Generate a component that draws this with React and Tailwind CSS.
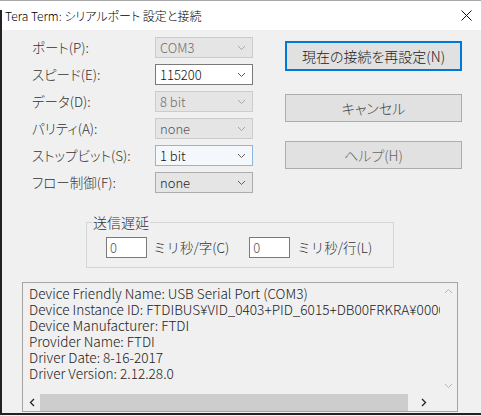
import React from "react";

const Chevron = ({ color = "#606060" }) => (
  <svg width="9" height="6" viewBox="0 0 9 6">
    <path d="M1 1l3.5 3.5L8 1" fill="none" stroke={color} strokeWidth="1" />
  </svg>
);

const rows = [
  { label: "ポート(P):", value: "COM3", box: "bg-[#e5e5e5] border-[#cccccc] text-[#6d6d6d]", chev: "#a8a8a8" },
  { label: "スピード(E):", value: "115200", box: "bg-white border-[#7a7a7a] text-[#111]", chev: "#606060" },
  { label: "データ(D):", value: "8 bit", box: "bg-[#e5e5e5] border-[#cccccc] text-[#6d6d6d]", chev: "#a8a8a8" },
  { label: "パリティ(A):", value: "none", box: "bg-[#e5e5e5] border-[#cccccc] text-[#555]", chev: "#a8a8a8" },
  { label: "ストップビット(S):", value: "1 bit", box: "bg-[#f4f8fc] border-[#8fb6dc] text-[#111]", chev: "#606060" },
  { label: "フロー制御(F):", value: "none", box: "bg-[#e5e5e5] border-[#adadad] text-[#222]", chev: "#606060" },
];

const info = [
  "Device Friendly Name: USB Serial Port (COM3)",
  "Device Instance ID: FTDIBUS¥VID_0403+PID_6015+DB00FRKRA¥0000",
  "Device Manufacturer: FTDI",
  "Provider Name: FTDI",
  "Driver Date: 8-16-2017",
  "Driver Version: 2.12.28.0",
];

export default function App() {
  return (
    <div className="w-[481px] h-[416px] bg-[#f0f0f0] relative overflow-hidden font-['Noto_Sans_CJK_JP',sans-serif] font-light [font-feature-settings:'palt'] text-[#222]">
      <div className="h-px bg-[#a9a9a9]" />
      <div className="h-[29px] bg-white flex items-center justify-between pl-[5px] pr-[9px]">
        <span className="text-[12px] text-black leading-none">Tera Term: シリアルポート 設定と接続</span>
        <svg width="11" height="11" viewBox="0 0 11 11">
          <path d="M0.5 0.5l10 10M10.5 0.5l-10 10" stroke="#111" strokeWidth="1" />
        </svg>
      </div>

      <div className="flex pt-[7px]">
        <div className="ml-[32px] flex flex-col gap-[6px]">
          {rows.map((r) => (
            <div key={r.label} className="flex items-center h-[21px]">
              <span className="w-[123px] text-[13.5px] leading-none text-[#333]">{r.label}</span>
              <div className={`w-[98px] h-[21px] border flex items-center justify-between pl-[4px] pr-[6px] text-[13px] ${r.box}`}>
                <span className="leading-none">{r.value}</span>
                <Chevron color={r.chev} />
              </div>
            </div>
          ))}
        </div>

        <div className="ml-[32px] w-[177px] flex flex-col pt-[4px]">
          <div className="h-[30px] border-2 border-[#0078d7] bg-[#e1e1e1] flex items-center justify-center text-[14px] text-[#222]">
            現在の接続を再設定(N)
          </div>
          <div className="mt-[23px] h-[28px] border border-[#adadad] bg-[#e1e1e1] flex items-center justify-center text-[14px] text-[#444]">
            キャンセル
          </div>
          <div className="mt-[19px] h-[28px] border border-[#adadad] bg-[#e1e1e1] flex items-center justify-center text-[14px] text-[#666]">
            ヘルプ(H)
          </div>
        </div>
      </div>

      <div className="ml-[86px] mt-[29px] w-[308px] h-[46px] border border-[#d5d5d5] relative">
        <span className="absolute left-[5px] -top-[10px] px-[1px] bg-[#f0f0f0] text-[14px] leading-[18px] text-[#333]">送信遅延</span>
        <div className="flex items-center mt-[14px] ml-[19px] text-[13.5px] text-[#333] [font-feature-settings:normal]">
          <div className="w-[41px] h-[21px] bg-white border border-[#7a7a7a] pl-[3px] text-[13px] leading-[19px] text-[#555]">0</div>
          <span className="ml-[6px] leading-none">ミリ秒/字(C)</span>
          <div className="ml-[20px] w-[41px] h-[21px] bg-white border border-[#7a7a7a] pl-[3px] text-[13px] leading-[19px] text-[#555]">0</div>
          <span className="ml-[7px] leading-none">ミリ秒/行(L)</span>
        </div>
      </div>

      <div className="ml-[22px] mt-[14px] w-[436px] h-[130px] border border-[#a5a5a5] flex flex-col">
        <div className="flex flex-1 min-h-0">
          <div className="flex-1 overflow-hidden pl-[6px] pt-[2px] text-[13.6px] leading-[16px] text-[#222] whitespace-nowrap">
            {info.map((l) => (
              <div key={l}>{l}</div>
            ))}
          </div>
          <div className="w-[17px] flex flex-col items-center justify-between py-[5px]">
            <svg width="9" height="6" viewBox="0 0 9 6">
              <path d="M1 5l3.5-3.5L8 5" fill="none" stroke="#b5b5b5" strokeWidth="1" />
            </svg>
            <Chevron color="#b5b5b5" />
          </div>
        </div>
        <div className="h-[17px] flex items-center">
          <div className="w-[17px] flex justify-center">
            <svg width="6" height="9" viewBox="0 0 6 9">
              <path d="M5 1L1.5 4.5L5 8" fill="none" stroke="#222" strokeWidth="1.3" />
            </svg>
          </div>
          <div className="w-[368px] h-[17px] bg-[#cdcdcd]" />
          <div className="flex-1 flex justify-center">
            <svg width="6" height="9" viewBox="0 0 6 9">
              <path d="M1 1l3.5 3.5L1 8" fill="none" stroke="#222" strokeWidth="1.3" />
            </svg>
          </div>
          <div className="w-[17px]" />
        </div>
      </div>

      <div className="absolute left-0 top-[10px] bottom-[2px] w-[2px] bg-[#222]" />
      <div className="absolute left-0 right-0 bottom-[1px] h-[2px] bg-[#222]" />
    </div>
  );
}
